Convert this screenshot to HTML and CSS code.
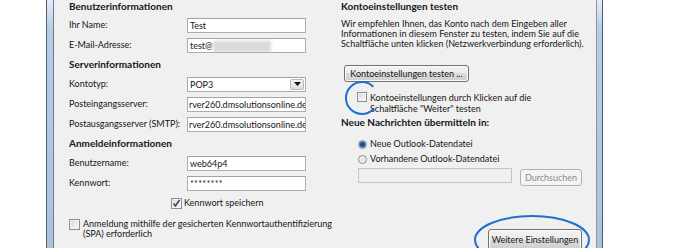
FILE: index.html
```html
<!DOCTYPE html>
<html lang="de">
<head>
  <meta charset="UTF-8" />
  <title>Konto hinzufügen</title>
  <link rel="stylesheet" href="styles.css">
</head>
<body>
<div class="window">
  <div class="dialog">

    <section class="col-left">
      <h2 class="group first">Benutzerinformationen</h2>
      <div class="row"><span class="label">Ihr Name:</span><span class="field">Test</span></div>
      <div class="row"><span class="label">E-Mail-Adresse:</span><span class="field">test@<span class="blur"></span></span></div>

      <h2 class="group">Serverinformationen</h2>
      <div class="row">
        <span class="label">Kontotyp:</span>
        <span class="field select">POP3
          <span class="drop"><svg width="7" height="4" viewBox="0 0 7 4"><path d="M0 0h7L3.5 4z" fill="#111"/></svg></span>
        </span>
      </div>
      <div class="row"><span class="label">Posteingangsserver:</span><span class="field tight">rver260.dmsolutionsonline.de</span></div>
      <div class="row"><span class="label">Postausgangsserver (SMTP):</span><span class="field tight">rver260.dmsolutionsonline.de</span></div>

      <h2 class="group">Anmeldeinformationen</h2>
      <div class="row"><span class="label">Benutzername:</span><span class="field">web64p4</span></div>
      <div class="row"><span class="label">Kennwort:</span><span class="field pw">********</span></div>
      <div class="row save">
        <span class="box checked"><svg width="9" height="9" viewBox="0 0 9 9"><path d="M1.5 4.5l2 2.5 4-6" fill="none" stroke="#34477e" stroke-width="1.6"/></svg></span>
        <span>Kennwort speichern</span>
      </div>
      <div class="check-row spa">
        <span class="box"></span>
        <span>Anmeldung mithilfe der gesicherten Kennwortauthentifizierung<br>(SPA) erforderlich</span>
      </div>
    </section>

    <section class="col-right">
      <h2 class="group first">Kontoeinstellungen testen</h2>
      <p class="intro">Wir empfehlen Ihnen, das Konto nach dem Eingeben aller<br>Informationen in diesem Fenster zu testen, indem Sie auf die<br>Schaltfläche unten klicken (Netzwerkverbindung erforderlich).</p>
      <button class="btn test">Kontoeinstellungen testen ...</button>

      <div class="check-row auto">
        <span class="box"></span>
        <span>Kontoeinstellungen durch Klicken auf die<br>Schaltfläche "Weiter" testen</span>
        <svg class="mark-circle" width="36" height="36" viewBox="0 0 36 36"><path d="M29.3 6.7A16 16 0 1 0 29.3 29.3" fill="none" stroke="#1f70cf" stroke-width="2"/></svg>
      </div>

      <h2 class="group deliver">Neue Nachrichten übermitteln in:</h2>
      <div class="radio-row first"><span class="radio on"></span>Neue Outlook-Datendatei</div>
      <div class="radio-row"><span class="radio"></span>Vorhandene Outlook-Datendatei</div>
      <div class="browse">
        <span class="field disabled"></span>
        <button class="btn" disabled>Durchsuchen</button>
      </div>

      <div class="more">
        <button class="btn">Weitere Einstellungen</button>
        <svg class="mark-ellipse" width="118" height="52" viewBox="0 0 118 52"><ellipse cx="59" cy="26" rx="57" ry="24" fill="none" stroke="#1f70cf" stroke-width="2"/></svg>
      </div>
    </section>

  </div>
</div>
</body>
</html>
```

FILE: styles.css
```css
* { box-sizing: border-box; }
body {
  margin: 0;
  background: #fff;
  font-family: Lato, 'Noto Sans', sans-serif;
  font-size: 9px;
  line-height: 10px;
  color: #161616;
  white-space: nowrap;
  overflow: hidden;
}
.window {
  margin-left: 46px;
  width: 557px;
  height: 248px;
  border-left: 1px solid #56606b;
  border-right: 1px solid #4f5863;
  padding: 0 5px 0 6px;
  background: linear-gradient(#e4eef8, #b6cde6 28px, #a9c3df);
}
.dialog {
  height: 100%;
  display: flex;
  background: #f0f0f0;
  border-left: 1px solid #6f7b88;
  border-right: 1px solid #8995a2;
}
.col-left { width: 287px; padding-left: 15px; }
.col-right { width: 241px; }

h2 { margin: 0; font-size: 10px; font-weight: bold; }
.group { height: 19px; line-height: 19px; }
.group.first { height: 10px; line-height: 10px; margin-bottom: 5px; padding-top: 1px; }

.row { display: flex; align-items: center; height: 20px; }
.label { width: 118px; }
.field {
  position: relative;
  width: 119px;
  height: 15px;
  line-height: 13px;
  padding: 0 2px;
  background: #fff;
  border: 1px solid #abadb3;
  border-top-color: #a0a3aa;
  overflow: hidden;
}
.field.tight { padding: 0 1px; }
.field.pw { letter-spacing: 0.3px; }
.blur {
  display: inline-block;
  width: 58px;
  height: 11px;
  vertical-align: middle;
  background: #dadada;
  filter: blur(1.5px);
}
.drop {
  position: absolute;
  right: 1px;
  top: 1px;
  width: 14px;
  height: 11px;
  display: flex;
  align-items: center;
  justify-content: center;
  border: 1px solid #b5b8bd;
  border-radius: 2px;
  background: linear-gradient(#f6f6f6, #dedede);
}

.box {
  display: inline-flex;
  align-items: center;
  justify-content: center;
  flex: none;
  width: 11px;
  height: 11px;
  border: 1px solid #8f8f8f;
  background: linear-gradient(135deg, #d9d9d9, #fbfbfb);
  box-shadow: inset 0 0 0 1px #f4f4f4;
}
.row.save { padding-left: 102px; }
.row.save .box { margin-right: 2px; }

.check-row { position: relative; display: flex; gap: 3px; }
.check-row.spa { margin-top: 6px; }
.check-row.auto { margin-top: 10px; padding-left: 16px; line-height: 11px; }
.check-row.auto .box { width: 10px; height: 10px; }

.intro { margin: 9px 0 0; }

.btn {
  display: block;
  height: 17px;
  padding: 0;
  font: inherit;
  line-height: 15px;
  color: #161616;
  border: 1px solid #707070;
  border-radius: 3px;
  background: linear-gradient(#f3f3f3, #ebebeb 50%, #dcdcdc 50%, #cfcfcf);
  box-shadow: inset 0 0 0 1px #fcfcfc;
}
.btn:disabled {
  color: #8a8a8a;
  border-color: #adb2b5;
  background: #f4f4f4;
  box-shadow: none;
}
.btn.test { margin: 16px 0 0 3px; width: 125px; }

.mark-circle { position: absolute; left: 3px; top: -12px; }

.group.deliver { height: 11px; line-height: 11px; margin-top: 3px; }

.radio-row { display: flex; align-items: center; gap: 3px; height: 10px; padding-left: 17px; margin-top: 5px; }
.radio-row.first { margin-top: 11px; }
.radio {
  width: 9px;
  height: 9px;
  border-radius: 50%;
  border: 1px solid #8e8f8f;
  background: radial-gradient(circle, #e4e4e4, #f8f8f8);
}
.radio.on { background: radial-gradient(circle, #1d4f8e 0 2px, #5c9ad6 3px, #e6e6e6 4px); }

.browse { display: flex; align-items: flex-start; gap: 8px; margin-top: 4px; padding-left: 17px; }
.field.disabled { width: 154px; background: #f0f0f0; border-color: #b9c6d6; }
.browse .btn { width: 62px; margin-top: 1px; }

.more { position: relative; display: flex; justify-content: flex-end; margin-top: 43px; }
.more .btn { width: 94px; height: 21px; line-height: 19px; }
.mark-ellipse { position: absolute; left: 132px; top: -15px; }
```
